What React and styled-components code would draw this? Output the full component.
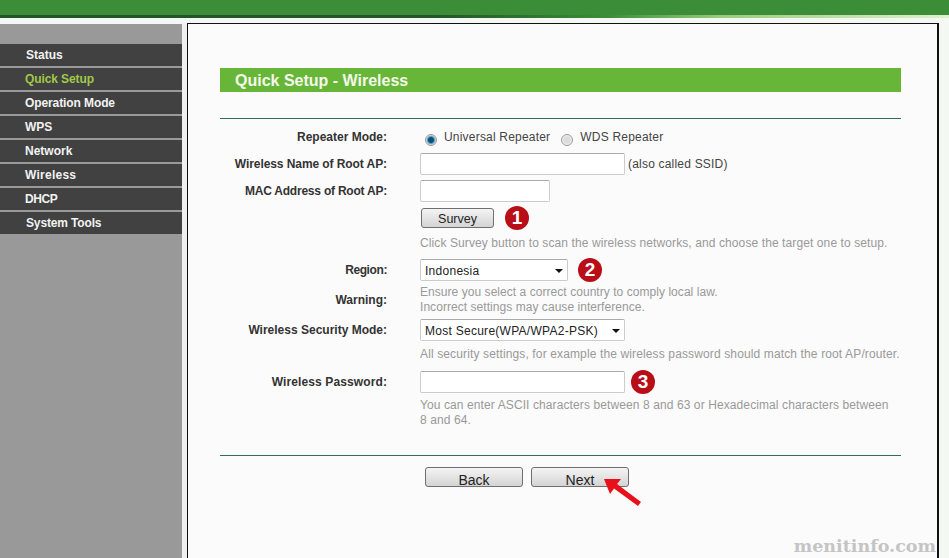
import React from 'react';
import styled, { createGlobalStyle } from 'styled-components';

const GlobalStyle = createGlobalStyle`
  html, body {
    margin: 0;
    padding: 0;
    height: 558px;
    overflow: hidden;
    background: #f3f8f3;
    font-family: "Liberation Sans", Arial, sans-serif;
  }
`;

const Page = styled.div`
  width: 949px;
  height: 558px;
  display: flex;
  flex-direction: column;
  position: relative;
  overflow: hidden;
`;

const TopBar = styled.div`
  height: 15px;
  flex-shrink: 0;
  background: #3b8d38;
`;

const TopEdge = styled.div`
  height: 3px;
  flex-shrink: 0;
  margin-bottom: 5px;
  background: linear-gradient(90deg, #24552a 0, #24552a 46%, #3b8d38 64%, #9acb7c 76%, #dff0d0 100%);
`;

const Body = styled.div`
  flex: 1;
  display: flex;
  min-height: 0;
`;

const Sidebar = styled.nav`
  width: 182px;
  flex-shrink: 0;
  margin-top: 1px;
  background: #999;
  padding-top: 20px;
  display: flex;
  flex-direction: column;
  gap: 2px;
`;

const MenuItem = styled.div`
  height: 22px;
  line-height: 22px;
  background: #414141;
  color: ${(p) => (p.$active ? '#a0c94a' : '#f2f2f2')};
  font-size: 12px;
  font-weight: bold;
  letter-spacing: ${(p) => p.$ls || 0}px;
  padding-left: ${(p) => (p.$inset ? 26 : 25)}px;
`;

const Divider = styled.div`
  width: 5px;
  flex-shrink: 0;
  background: #f0f0f0;
  border-right: 1px solid #111;
  box-sizing: content-box;
`;

const Main = styled.main`
  width: 751px;
  flex-shrink: 0;
  box-sizing: border-box;
  background: #fbfbfb;
  padding: 44px 0 0 32px;
  border-top: 1px solid #111;
  border-right: 2px solid #111;
`;

const Panel = styled.div`
  width: 681px;
`;

const TitleBar = styled.h1`
  margin: 0;
  height: 24px;
  line-height: 25px;
  background: #67b638;
  color: #f4f8ea;
  font-size: 16px;
  font-weight: bold;
  padding-left: 15px;
`;

const Rule = styled.hr`
  margin: ${(p) => p.$top}px 0 0;
  border: 0;
  height: 1px;
  background: #2e7050;
`;

const Form = styled.div`
  display: flex;
  flex-direction: column;
`;

const Row = styled.div`
  display: grid;
  grid-template-columns: 167px 1fr;
  column-gap: 33px;
  align-items: center;
  height: ${(p) => p.$h}px;
  margin-top: ${(p) => p.$top || 0}px;
`;

const Label = styled.div`
  text-align: right;
  font-size: 12px;
  font-weight: bold;
  color: #333;
  letter-spacing: ${(p) => p.$ls || 0}px;
`;

const Value = styled.div`
  display: flex;
  align-items: center;
  font-size: 12px;
  color: #444;
`;

const TextField = styled.input`
  box-sizing: border-box;
  width: ${(p) => p.$w}px;
  height: 22px;
  margin: 0;
  background: #fff;
  border: 1px solid #ccc;
  border-top-color: #aaa;
  border-radius: 2px;
  outline: none;
`;

const Aside = styled.span`
  margin-left: 3px;
  letter-spacing: 0.2px;
`;

const RadioDot = styled.span`
  width: 12px;
  height: 12px;
  flex-shrink: 0;
  border-radius: 50%;
  box-sizing: border-box;
  border: 1px solid #9a9a9a;
  background: ${(p) =>
    p.$on
      ? 'radial-gradient(circle, #0f4f78 0 2.5px, #58a0c0 3.5px, #dfe8ec 5px)'
      : 'radial-gradient(circle, #dcdcdc 0 3px, #f2f2f2 5px)'};
  margin: 6px 7px 0 ${(p) => p.$gap || 0}px;
`;

const RadioText = styled.span`
  letter-spacing: 0.2px;
`;

const SmallButton = styled.button`
  box-sizing: border-box;
  width: ${(p) => p.$w}px;
  height: 20px;
  margin: 0 0 0 ${(p) => p.$left || 0}px;
  padding: 2px 0 0;
  border: 1px solid #6f6f6f;
  border-radius: 3px;
  background: linear-gradient(#f4f4f4, #d4d4d4);
  color: #222;
  font-family: "Liberation Sans", Arial, sans-serif;
  font-size: 12.5px;
  line-height: 16px;
`;

const NavButton = styled(SmallButton)`
  padding-top: 4px;
  font-size: 14px;
`;

const Badge = styled.span`
  width: 24px;
  height: 24px;
  flex-shrink: 0;
  margin-left: ${(p) => p.$left}px;
  border-radius: 50%;
  background: #b90d18;
  color: #fff;
  font-size: 19px;
  font-weight: bold;
  line-height: 24px;
  text-align: center;
`;

const Hint = styled.div`
  font-size: 12px;
  line-height: 15px;
  color: #999;
  letter-spacing: ${(p) => p.$ls ?? 0.1}px;
`;

const SelectBox = styled.div`
  box-sizing: border-box;
  width: ${(p) => p.$w}px;
  height: 22px;
  display: flex;
  align-items: center;
  justify-content: space-between;
  padding: 1px 4px 0 4px;
  background: #fff;
  border: 1px solid #ccc;
  border-top-color: #aaa;
  border-radius: 2px;
  color: #222;
  font-size: 12px;
  letter-spacing: 0.27px;
`;

const Caret = styled.span`
  width: 0;
  height: 0;
  border-left: 4px solid transparent;
  border-right: 4px solid transparent;
  border-top: 4px solid #111;
`;

const ButtonBar = styled.div`
  display: flex;
  gap: 8px;
  margin: 11px 0 0 205px;
`;

const Arrow = styled.svg`
  position: absolute;
  left: 600px;
  top: 475px;
`;

const Watermark = styled.div`
  position: absolute;
  right: 13px;
  bottom: 2px;
  font-family: "DejaVu Serif", serif;
  font-size: 17.5px;
  font-weight: bold;
  color: #c4c4c4;
`;

const menu = [
  { label: 'Status', inset: true },
  { label: 'Quick Setup', active: true, ls: -0.1 },
  { label: 'Operation Mode', ls: -0.1 },
  { label: 'WPS' },
  { label: 'Network' },
  { label: 'Wireless', ls: 0.25 },
  { label: 'DHCP', ls: -0.4 },
  { label: 'System Tools', inset: true, ls: -0.15 },
];

const App = () => (
  <Page>
    <GlobalStyle />
    <TopBar />
    <TopEdge />
    <Body>
      <Sidebar>
        {menu.map((item) => (
          <MenuItem key={item.label} $active={item.active} $inset={item.inset} $ls={item.ls}>
            {item.label}
          </MenuItem>
        ))}
      </Sidebar>
      <Divider />
      <Main>
        <Panel>
          <TitleBar>Quick Setup - Wireless</TitleBar>
          <Rule $top={26} />
          <Form>
            <Row $h={22} $top={7}>
              <Label>Repeater Mode:</Label>
              <Value>
                <RadioDot $on $gap={5} />
                <RadioText>Universal Repeater</RadioText>
                <RadioDot $gap={11} />
                <RadioText>WDS Repeater</RadioText>
              </Value>
            </Row>
            <Row $h={22} $top={5}>
              <Label $ls={-0.08}>Wireless Name of Root AP:</Label>
              <Value>
                <TextField $w={205} />
                <Aside>(also called SSID)</Aside>
              </Value>
            </Row>
            <Row $h={22} $top={5}>
              <Label $ls={-0.22}>MAC Address of Root AP:</Label>
              <Value>
                <TextField $w={130} />
              </Value>
            </Row>
            <Row $h={24} $top={4}>
              <span />
              <Value>
                <SmallButton $w={73} $left={1}>Survey</SmallButton>
                <Badge $left={11}>1</Badge>
              </Value>
            </Row>
            <Row $h={15} $top={6}>
              <span />
              <Hint>Click Survey button to scan the wireless networks, and choose the target one to setup.</Hint>
            </Row>
            <Row $h={24} $top={7}>
              <Label $ls={-0.4}>Region:</Label>
              <Value>
                <SelectBox $w={148}>
                  Indonesia
                  <Caret />
                </SelectBox>
                <Badge $left={10}>2</Badge>
              </Value>
            </Row>
            <Row $h={30} $top={3}>
              <Label>Warning:</Label>
              <Hint $ls={0.05}>
                Ensure you select a correct country to comply local law.
                <br />
                Incorrect settings may cause interference.
              </Hint>
            </Row>
            <Row $h={22} $top={4}>
              <Label>Wireless Security Mode:</Label>
              <Value>
                <SelectBox $w={205}>
                  Most Secure(WPA/WPA2-PSK)
                  <Caret />
                </SelectBox>
              </Value>
            </Row>
            <Row $h={15} $top={6}>
              <span />
              <Hint $ls={0.13}>All security settings, for example the wireless password should match the root AP/router.</Hint>
            </Row>
            <Row $h={24} $top={8}>
              <Label $ls={0.11}>Wireless Password:</Label>
              <Value>
                <TextField $w={205} />
                <Badge $left={6}>3</Badge>
              </Value>
            </Row>
            <Row $h={30} $top={4}>
              <span />
              <Hint>
                You can enter ASCII characters between 8 and 63 or Hexadecimal characters between
                <br />
                8 and 64.
              </Hint>
            </Row>
          </Form>
          <Rule $top={27} />
          <ButtonBar>
            <NavButton $w={98}>Back</NavButton>
            <NavButton $w={98}>Next</NavButton>
          </ButtonBar>
        </Panel>
      </Main>
    </Body>
    <Arrow width="44" height="34" viewBox="0 0 44 34">
      <path d="M4 4 L21 4 L17 9 L41 27 L38 31 L14 13.5 L10 19 Z" fill="#e8101a" />
    </Arrow>
    <Watermark>menitinfo.com</Watermark>
  </Page>
);

export default App;
